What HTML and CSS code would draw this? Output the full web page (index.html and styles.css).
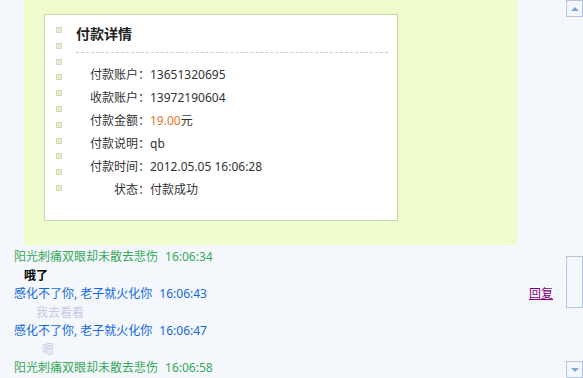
FILE: index.html
```html
<!DOCTYPE html>
<html lang="zh-CN">
<head>
    <meta charset="UTF-8">
    <meta name="viewport" content="width=device-width, initial-scale=1.0">
    <title>付款详情</title>
    <link rel="stylesheet" href="styles.css">
</head>
<body>

<div class="page">
    <div class="main">
        <div class="panel">
            <div class="card">
                <div class="dots">
                    <span></span><span></span><span></span><span></span>
                    <span></span><span></span><span></span><span></span>
                    <span></span><span></span><span></span>
                </div>
                <div class="detail">
                    <h2 class="title">付款详情</h2>
                    <ul class="rows">
                        <li><span class="label">付款账户：</span><span class="value">13651320695</span></li>
                        <li><span class="label">收款账户：</span><span class="value">13972190604</span></li>
                        <li><span class="label">付款金额：</span><span class="value"><span class="money">19.00</span>元</span></li>
                        <li><span class="label">付款说明：</span><span class="value">qb</span></li>
                        <li><span class="label">付款时间：</span><span class="value">2012.05.05 16:06:28</span></li>
                        <li><span class="label">状态：</span><span class="value">付款成功</span></li>
                    </ul>
                </div>
            </div>
        </div>

        <div class="chat">
            <div class="line green"><span class="who">阳光刺痛双眼却未散去悲伤</span><span class="time">16:06:34</span></div>
            <div class="msg msg-bold">哦了</div>
            <div class="line blue"><span class="who">感化不了你, 老子就火化你</span><span class="time">16:06:43</span><a class="reply" href="#">回复</a></div>
            <div class="msg msg-light">我去看看</div>
            <div class="line blue"><span class="who">感化不了你, 老子就火化你</span><span class="time">16:06:47</span></div>
            <div class="msg msg-light msg-short">嗯</div>
            <div class="line green"><span class="who">阳光刺痛双眼却未散去悲伤</span><span class="time">16:06:58</span></div>
        </div>
    </div>

    <div class="scrollbar">
        <div class="scroll-btn"><span class="arrow-up"></span></div>
        <div class="track">
            <div class="thumb"></div>
        </div>
        <div class="scroll-btn"><span class="arrow-down"></span></div>
    </div>
</div>

</body>
</html>
```

FILE: styles.css
```css
body {
    margin: 0;
    padding: 0;
    background-color: #f4f7fb;
    color: #333;
    font-family: "Noto Sans", "Noto Sans CJK SC", sans-serif;
    font-size: 12px;
}
.page {
    display: flex;
    height: 378px;
    overflow: hidden;
}
.main {
    width: 565px;
    flex: none;
    border-right: 1px solid #fafbfc;
}
.panel {
    width: 493px;
    height: 245px;
    margin-left: 24px;
    padding: 14px 0 0 20px;
    box-sizing: border-box;
    background-color: #eefccc;
}
.card {
    display: flex;
    width: 354px;
    height: 207px;
    box-sizing: border-box;
    background-color: #ffffff;
    border: 1px solid #c9d6ae;
}
.dots {
    display: flex;
    flex-direction: column;
    gap: 9.8px;
    margin: 12px 0 0 11px;
}
.dots span {
    display: block;
    width: 4px;
    height: 4px;
    background-color: #e3ebd1;
    border: 1px solid #d0dcb6;
}
.detail {
    width: 312px;
    margin-left: 14px;
}
.title {
    margin: 0;
    padding: 9px 0 8px 0;
    font-size: 14px;
    line-height: 20px;
    font-weight: bold;
    color: #222;
    border-bottom: 1px dashed #cccccc;
}
.rows {
    list-style: none;
    margin: 0;
    padding: 10px 0 0 0;
    line-height: 23px;
}
.rows li {
    height: 23px;
    white-space: nowrap;
}
.label {
    display: inline-block;
    width: 61px;
    margin-left: 13px;
    text-align: right;
}
.money {
    color: #e8761e;
}
.chat {
    padding: 3px 12px 0 14px;
    line-height: 18.5px;
}
.line {
    display: flex;
}
.green {
    color: #35a85a;
}
.blue {
    color: #1268e2;
}
.time {
    margin-left: 7px;
}
.reply {
    margin-left: auto;
    color: #800080;
}
.msg-bold {
    padding-left: 10px;
    font-weight: bold;
    color: #000;
}
.msg-light {
    padding-left: 22px;
    color: #c9c9e6;
}
.msg-short {
    padding-left: 28px;
}
.scrollbar {
    width: 17px;
    flex: none;
    display: flex;
    flex-direction: column;
    background-color: #f3f6fa;
}
.scroll-btn {
    height: 17px;
    box-sizing: border-box;
    border: 1px solid #b7c5dd;
    display: flex;
    align-items: center;
    justify-content: center;
}
.track {
    flex: 1;
}
.thumb {
    height: 52px;
    margin-top: 239px;
    box-sizing: border-box;
    border: 1px solid #b7c5dd;
}
.arrow-up {
    border-left: 4px solid transparent;
    border-right: 4px solid transparent;
    border-bottom: 4px solid #7aa5d8;
}
.arrow-down {
    border-left: 4px solid transparent;
    border-right: 4px solid transparent;
    border-top: 4px solid #7aa5d8;
}
```
